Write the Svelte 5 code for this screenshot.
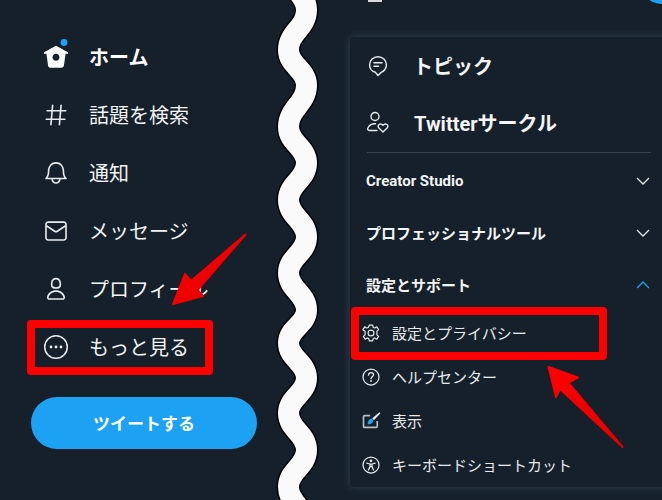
<script>
  const mainNav = [
    { key: 'home', label: 'ホーム', active: true },
    { key: 'explore', label: '話題を検索' },
    { key: 'bell', label: '通知' },
    { key: 'mail', label: 'メッセージ' },
    { key: 'profile', label: 'プロフィール' },
    { key: 'more', label: 'もっと見る' }
  ];

  const sections = [
    { label: 'Creator Studio', open: false, latin: true },
    { label: 'プロフェッショナルツール', open: false },
    { label: '設定とサポート', open: true }
  ];

  const subItems = [
    { key: 'gear', label: '設定とプライバシー' },
    { key: 'help', label: 'ヘルプセンター' },
    { key: 'display', label: '表示' },
    { key: 'access', label: 'キーボードショートカット' }
  ];

  // y of each turn of the torn edge, alternating right and left
  const turns = [-28, 10, 50, 85, 127, 163, 200, 237, 273, 310, 343, 378, 413, 450, 487, 525];

  function wavePath() {
    const xAt = (i) => (i % 2 === 0 ? 288.5 : 306.5);
    let d = `M${xAt(0)} ${turns[0]}`;
    for (let i = 1; i < turns.length; i++) {
      const dy = (turns[i] - turns[i - 1]) * 0.45;
      d += ` C${xAt(i - 1)} ${turns[i - 1] + dy} ${xAt(i)} ${turns[i] - dy} ${xAt(i)} ${turns[i]}`;
    }
    return d;
  }
</script>

{#snippet icon(key)}
  {#if key === 'home'}
    <svg class="ico" viewBox="0 0 24 24"><path class="fill" d="M22.58 7.35L12.475 1.897c-.297-.16-.654-.16-.95 0L1.425 7.35c-.486.264-.667.87-.405 1.356.18.335.525.525.88.525.16 0 .324-.038.475-.12l.734-.396 1.59 11.25c.216 1.214 1.31 2.062 2.66 2.062h9.282c1.35 0 2.444-.848 2.662-2.088l1.588-11.225.737.398c.485.263 1.092.082 1.354-.404.263-.486.08-1.093-.404-1.355zM12 15.435c-1.795 0-3.25-1.455-3.25-3.25s1.455-3.25 3.25-3.25 3.25 1.455 3.25 3.25-1.455 3.25-3.25 3.25z"/><circle class="dot" cx="19.4" cy="-1.4" r="3.2"/></svg>
  {:else if key === 'explore'}
    <svg class="ico" viewBox="0 0 24 24"><path class="fill" d="M21 7.337h-3.93l.372-4.272c.036-.412-.27-.775-.682-.812-.417-.03-.776.27-.812.683l-.383 4.4h-6.32l.37-4.27c.037-.413-.27-.776-.68-.813-.42-.03-.777.27-.813.683l-.382 4.4H3.782c-.414 0-.75.337-.75.75s.336.75.75.75H7.61l-.55 6.327H3c-.414 0-.75.336-.75.75s.336.75.75.75h3.93l-.372 4.272c-.036.412.27.775.682.812l.066.003c.385 0 .712-.295.746-.686l.383-4.4h6.32l-.37 4.27c-.036.413.27.776.682.813l.066.003c.385 0 .712-.295.746-.686l.382-4.4h3.957c.413 0 .75-.337.75-.75s-.337-.75-.75-.75H16.39l.55-6.327H21c.414 0 .75-.336.75-.75s-.336-.75-.75-.75zm-6.115 7.826h-6.32l.55-6.326h6.32l-.55 6.326z"/></svg>
  {:else if key === 'bell'}
    <svg class="ico" viewBox="0 0 24 24"><path class="fill" d="M21.697 16.468c-.02-.016-2.14-1.64-2.103-6.03.02-2.532-.812-4.782-2.347-6.335C15.872 2.71 14.01 1.94 12.005 1.93h-.013c-2.004.01-3.866.78-5.242 2.174-1.534 1.553-2.368 3.802-2.346 6.334.037 4.33-2.02 5.967-2.102 6.03-.26.193-.366.53-.265.838.102.308.39.515.712.515h4.92c.102 2.31 1.997 4.16 4.33 4.16s4.226-1.85 4.327-4.16h4.922c.322 0 .61-.206.71-.514.103-.307-.003-.645-.263-.838zM12 20.478c-1.505 0-2.73-1.177-2.828-2.658h5.656c-.1 1.48-1.323 2.66-2.828 2.66zM4.38 16.32c.74-1.132 1.548-3.028 1.524-5.896-.018-2.16.644-3.982 1.913-5.267C8.91 4.05 10.397 3.437 12 3.43c1.603.008 3.087.62 4.18 1.728 1.27 1.285 1.933 3.106 1.915 5.267-.024 2.868.785 4.765 1.525 5.896H4.38z"/></svg>
  {:else if key === 'mail'}
    <svg class="ico" viewBox="0 0 24 24"><path class="fill" d="M19.25 3.018H4.75C3.233 3.018 2 4.252 2 5.77v12.495c0 1.518 1.233 2.753 2.75 2.753h14.5c1.517 0 2.75-1.235 2.75-2.753V5.77c0-1.518-1.233-2.752-2.75-2.752zm-14.5 1.5h14.5c.69 0 1.25.56 1.25 1.25v.714l-8.05 5.367c-.273.18-.626.182-.9-.002L3.5 6.482v-.714c0-.69.56-1.25 1.25-1.25zm14.5 14.998H4.75c-.69 0-1.25-.56-1.25-1.25V8.24l7.24 4.83c.383.256.822.384 1.26.384.44 0 .877-.128 1.26-.383l7.24-4.83v10.022c0 .69-.56 1.25-1.25 1.25z"/></svg>
  {:else if key === 'profile'}
    <svg class="ico" viewBox="0 0 24 24"><path class="fill" d="M12 11.816c1.355 0 2.872-.15 3.84-1.256.814-.93 1.078-2.368.806-4.392-.38-2.825-2.117-4.512-4.646-4.512S7.734 3.343 7.354 6.168c-.272 2.024-.008 3.462.806 4.392.968 1.107 2.485 1.256 3.84 1.256zM8.84 6.368c.162-1.2.787-3.212 3.16-3.212s2.998 2.013 3.16 3.212c.207 1.55.057 2.627-.45 3.205-.455.52-1.266.743-2.71.743s-2.255-.223-2.71-.743c-.507-.578-.657-1.656-.45-3.205zm11.44 12.868c-.877-3.526-4.282-5.99-8.28-5.99s-7.403 2.464-8.28 5.99c-.172.692-.028 1.4.395 1.94.408.52 1.04.82 1.733.82h12.304c.693 0 1.325-.3 1.733-.82.424-.54.567-1.247.394-1.94zm-1.576 1.016c-.126.16-.316.246-.552.246H5.848c-.235 0-.426-.085-.552-.246-.137-.174-.18-.412-.12-.654.71-2.855 3.517-4.85 6.824-4.85s6.114 1.994 6.824 4.85c.06.242.017.48-.12.654z"/></svg>
  {:else if key === 'more'}
    <svg class="ico" viewBox="0 0 24 24"><circle class="line" cx="12" cy="12" r="10.4" stroke-width="1.4"/><circle class="fill" cx="7.4" cy="12" r="1.3"/><circle class="fill" cx="12" cy="12" r="1.3"/><circle class="fill" cx="16.6" cy="12" r="1.3"/></svg>
  {:else if key === 'topic'}
    <svg class="ico" viewBox="0 0 24 24"><path class="line" stroke-width="1.5" d="M12 21.5l-2.6-3.2C6 17.5 3.6 14.4 3.6 10.9 3.6 6.3 7.4 2.7 12 2.7s8.4 3.6 8.4 8.2c0 4-3 6.4-5.5 7.8z"/><path class="line" stroke-width="1.6" stroke-linecap="round" d="M8 8.800h8M8 12.200h4.500"/></svg>
  {:else if key === 'circle'}
    <svg class="ico" viewBox="0 0 24 24"><circle class="line" stroke-width="1.4" cx="9" cy="5.5" r="4"/><path class="line" stroke-width="1.4" stroke-linecap="round" d="M11 19.500H3.500c-2 0-2.300-1.500-1.400-3 1.300-2.300 4-4 7.400-3.800"/><path class="line" stroke-width="1.4" stroke-linejoin="round" d="M17 21l-4.300-4.300c-2-2.400 1.700-5.300 4.300-2.400 2.600-2.900 6.300 0 4.300 2.400z"/></svg>
  {:else if key === 'gear'}
    <svg class="ico" viewBox="0 0 24 24"><circle class="line" stroke-width="1.4" cx="12" cy="12" r="3.5"/><path class="line" stroke-width="1.4" stroke-linejoin="round" d="M10 2.500h4l.6 2.800 1.900.8 2.400-1.500 2.300 3.400-2.100 1.800v4.400l2.100 1.800-2.300 3.400-2.400-1.500-1.900.8-.6 2.800h-4l-.6-2.800-1.900-.8-2.400 1.500-2.300-3.400 2.100-1.800V9.800L2.200 8l2.300-3.400 2.400 1.500 1.900-.8z"/></svg>
  {:else if key === 'help'}
    <svg class="ico" viewBox="0 0 24 24"><circle class="line" stroke-width="1.5" cx="12" cy="12" r="9.600"/><path class="line" stroke-width="1.6" stroke-linecap="round" d="M9 9.600c.2-1.800 1.400-2.800 3.100-2.800 1.700 0 2.900 1.100 2.900 2.600 0 2.400-3 2.400-3 4.600"/><circle class="fill" cx="12" cy="16.800" r="1.100"/></svg>
  {:else if key === 'display'}
    <svg class="ico" viewBox="0 0 24 24"><path class="frame" d="M11 5.500H4.500C3.500 5.500 3 6 3 7v11.500c0 .8.500 1.200 1.200 1.200H18c1 0 1.500-.5 1.500-1.500V12"/><path class="dot" d="M7.800 15.800c.2-3.800 2-6.500 5-6.800l2 2.200c-.4 3.400-3 5.200-7 4.600z"/><path class="fill" d="M15.500 11l-2-2.200L21.800 1.800c.7-.5 1.800.6 1.300 1.300z"/></svg>
  {:else if key === 'access'}
    <svg class="ico" viewBox="0 0 24 24"><circle class="line" stroke-width="1.5" cx="12" cy="12" r="9.600"/><circle class="fill" cx="12" cy="7" r="1.700"/><path class="line" stroke-width="1.500" stroke-linecap="round" stroke-linejoin="round" d="M7 9.800l3.800 1v3L9 18M17 9.800l-3.800 1v3L15 18M10.800 10.800h2.400M10.800 13.800h2.400"/></svg>
  {/if}
{/snippet}

<div class="page">
  <nav class="side">
    {#each mainNav as item}
      <div class="side-row" class:active={item.active}>
        {@render icon(item.key)}
        <span class="lift">{item.label}</span>
      </div>
    {/each}
    <button class="tweet"><span class="lift">ツイートする</span></button>
  </nav>

  <div class="right">
    <div class="strip">
      <span class="stub"></span>
      <span class="avatar"></span>
    </div>
    <div class="menu">
      <div class="menu-row topic">
        <span class="topic-ico">{@render icon('topic')}</span>
        <span>トピック</span>
      </div>
      <div class="menu-row circle-row">
        <span class="topic-ico">{@render icon('circle')}</span>
        <span>Twitterサークル</span>
      </div>
      <div class="divider"></div>
      <div class="sections">
        {#each sections as s}
          <div class="section" class:open={s.open}>
            <span class:lift={!s.latin}>{s.label}</span>
            <svg class="chev" viewBox="0 0 14 8">
              {#if s.open}
                <path d="M1 7l6-6 6 6" />
              {:else}
                <path d="M1 1l6 6 6-6" />
              {/if}
            </svg>
          </div>
        {/each}
      </div>
      {#each subItems as sub}
        <div class="sub">
          <span class="sub-ico">{@render icon(sub.key)}</span>
          <span class="lift">{sub.label}</span>
        </div>
      {/each}
    </div>
  </div>

  <!-- torn edge between the two captures -->
  <svg class="overlay" viewBox="0 0 662 500">
    <path d={wavePath()} class="wave-edge" />
    <path d={wavePath()} class="wave-fill" />
  </svg>

  <!-- annotations -->
  <div class="mark mark-more"></div>
  <div class="mark mark-settings"></div>
  <svg class="overlay" viewBox="0 0 662 500">
    <defs>
      <linearGradient id="arrowA" x1="0" y1="0" x2="1" y2="1">
        <stop offset="0" stop-color="#ff0000" />
        <stop offset="1" stop-color="#e00000" />
      </linearGradient>
    </defs>
    <path class="arrow" fill="url(#arrowA)" stroke="url(#arrowA)" d="M173 304L185 274 191 281 245.500 234.500 197.500 290 203 296z" />
    <path class="arrow" fill="url(#arrowA)" stroke="url(#arrowA)" d="M548.500 367L578 377.500 568.500 383 622.500 447 560 389 556 397z" />
  </svg>
</div>

<style>
  :global(body) {
    background: #15202b;
  }

  .page {
    position: relative;
    display: flex;
    width: 662px;
    height: 500px;
    overflow: hidden;
    background: #15202b;
    color: #fff;
    font-family: Roboto, "Noto Sans CJK JP", sans-serif;
  }

  .side {
    flex: 0 0 350px;
    padding-top: 28px;
    box-sizing: border-box;
  }

  .lift {
    display: block;
    padding-bottom: 2px;
  }

  .side-row {
    display: flex;
    align-items: center;
    gap: 20px;
    height: 58px;
    padding-left: 43px;
    font-size: 20px;
    color: #f2f4f5;
  }

  .side-row .ico {
    width: 26px;
    height: 26px;
    overflow: visible;
  }

  .side-row.active {
    font-weight: 700;
    color: #fff;
  }

  .tweet {
    display: block;
    width: 226px;
    height: 52px;
    margin: 21px 0 0 31px;
    border: none;
    border-radius: 26px;
    background: #1da1f2;
    color: #fff;
    font: inherit;
    font-size: 17px;
    font-weight: 700;
  }

  .right {
    flex: 1;
    min-width: 0;
  }

  .strip {
    display: flex;
    justify-content: space-between;
    height: 37px;
    padding-left: 18px;
  }

  .stub {
    width: 14px;
    height: 2px;
    background: #d9d9d9;
  }

  .avatar {
    width: 44px;
    height: 44px;
    margin: -40px -22px 0 0;
    border-radius: 50%;
    background: #1da1f2;
  }

  .menu {
    width: 330px;
    height: 450px;
    border-radius: 4px;
    background: #15202b;
    box-shadow: 0 0 8px rgba(136, 153, 166, 0.28);
  }

  .menu-row {
    display: flex;
    align-items: center;
    height: 57px;
    font-size: 20px;
    font-weight: 700;
    color: #f2f4f5;
  }

  .topic-ico {
    display: flex;
    width: 24px;
    height: 24px;
    margin: 0 0 0 16px;
  }

  .topic span:last-child {
    margin-left: 23px;
  }

  .circle-row span:last-child {
    margin-left: 24px;
  }

  .divider {
    width: 284px;
    height: 1px;
    margin: 1px 0 0 17px;
    background: #38444d;
  }

  .sections {
    padding-top: 2px;
  }

  .section {
    display: flex;
    align-items: center;
    justify-content: space-between;
    width: 284px;
    height: 52px;
    margin-left: 16px;
    font-size: 15px;
    font-weight: 700;
    color: #f2f4f5;
  }

  .chev {
    width: 14px;
    height: 8px;
    fill: none;
    stroke: #e6e9eb;
    stroke-width: 1.3;
  }

  .section.open .chev {
    stroke: #1da1f2;
  }

  .sub {
    display: flex;
    align-items: center;
    height: 44px;
    padding-left: 11px;
    font-size: 15px;
    color: #e8ebed;
  }

  .sub-ico {
    display: flex;
    width: 20px;
    height: 20px;
    margin-right: 11px;
  }

  .ico {
    display: block;
    width: 100%;
    height: 100%;
  }

  .fill {
    fill: #e8ebed;
  }

  .active .fill {
    fill: #fff;
  }

  .line {
    fill: none;
    stroke: #e8ebed;
  }

  .frame {
    fill: none;
    stroke: #b8bec3;
    stroke-width: 2;
  }

  .dot {
    fill: #1da1f2;
  }

  .overlay {
    position: absolute;
    inset: 0;
    width: 662px;
    height: 500px;
    pointer-events: none;
  }

  .wave-edge {
    fill: none;
    stroke: #000;
    stroke-width: 24;
  }

  .wave-fill {
    fill: none;
    stroke: #fafafa;
    stroke-width: 21;
  }

  .mark {
    position: absolute;
    box-sizing: border-box;
    border: 8px solid #f00;
    border-radius: 4px;
  }

  .mark-more {
    left: 27px;
    top: 320px;
    width: 186px;
    height: 55px;
  }

  .mark-settings {
    left: 351px;
    top: 307px;
    width: 256px;
    height: 53px;
  }

  .arrow {
    stroke-width: 2;
    stroke-linejoin: round;
  }
</style>
